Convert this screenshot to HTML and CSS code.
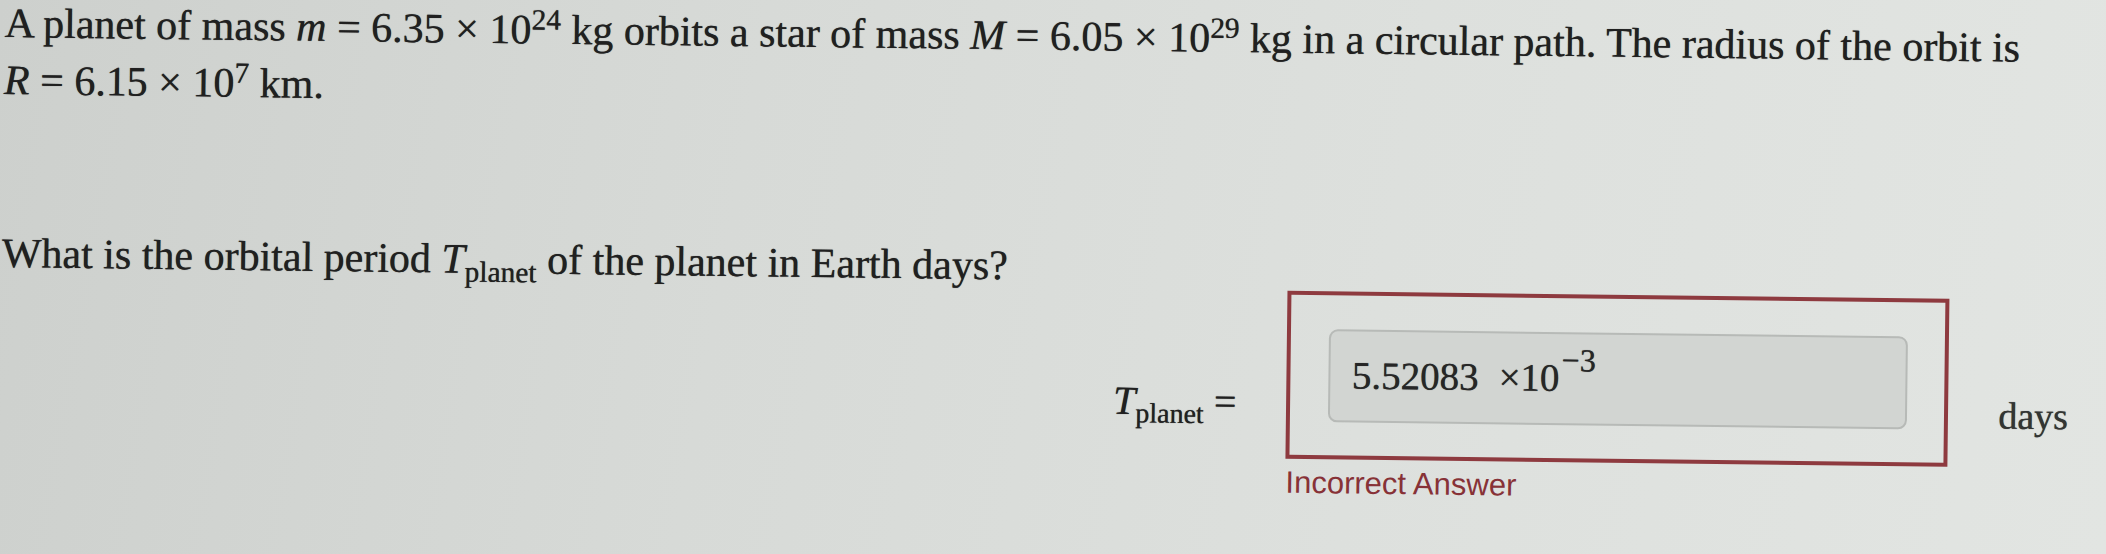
FILE: index.html
```html
<!DOCTYPE html>
<html lang="en">
<head>
<meta charset="utf-8">
<title>Orbital period</title>
<link rel="stylesheet" href="styles.css">
</head>
<body>
<div class="page">
  <p class="intro">A planet of mass <i class="mi">m</i> = 6.35 × 10<sup>24</sup> kg orbits a star of mass <i class="mi">M</i> = 6.05 × 10<sup>29</sup> kg in a circular path. The radius of the orbit is<br><i class="mi">R</i> = 6.15 × 10<sup>7</sup> km.</p>
  <p class="question">What is the orbital period <i class="mi">T</i><sub>planet</sub> of the planet in Earth days?</p>
  <div class="answer">
    <div class="label"><i class="mi">T</i><sub>planet</sub> =</div>
    <div class="box">
      <div class="input">5.52083<span class="times">×10<sup class="exp">−3</sup></span></div>
    </div>
    <div class="unit">days</div>
    <div class="feedback">Incorrect Answer</div>
  </div>
</div>
</body>
</html>
```
FILE: styles.css
```css
html, body {
  margin: 0;
  padding: 0;
}
body {
  width: 2106px;
  height: 554px;
  overflow: hidden;
  background: linear-gradient(100deg, #cdd0cd 0%, #d7dad7 35%, #dde0dd 65%, #e2e5e2 100%);
  font-family: "Liberation Serif", "Times New Roman", serif;
  color: #202020;
}
.page {
  padding-left: 5px;
  transform: rotate(0.7deg);
  transform-origin: 0 0;
  text-shadow: 0 0 0.7px rgba(20, 20, 20, 0.8);
}
.mi {
  font-style: italic;
}
sup {
  font-size: 0.7em;
  vertical-align: 0.48em;
  line-height: 0;
}
sub {
  font-size: 0.7em;
  vertical-align: -0.3em;
  line-height: 0;
}
.intro {
  margin: -5px 0 0;
  font-size: 42px;
  line-height: 57px;
}
.question {
  margin: 124px 0 0;
  font-size: 42px;
  line-height: 40px;
}
.answer {
  display: grid;
  grid-template-columns: auto auto auto;
  justify-content: end;
  align-items: start;
  column-gap: 50px;
  padding-right: 33px;
  margin-top: 2px;
}
.label {
  font-size: 40px;
  line-height: 44px;
  padding-top: 90px;
}
.box {
  border: 4px solid #8e3a3f;
  padding: 34px 37px 33px 38px;
  width: 662px;
  box-sizing: border-box;
}
.input {
  height: 93px;
  box-sizing: border-box;
  border: 2px solid #b7bab7;
  border-radius: 9px;
  background: #d2d5d2;
  padding: 22px 0 0 21px;
  font-size: 39px;
  line-height: 44px;
  color: #262626;
}
.times {
  margin-left: 20px;
}
.exp {
  font-size: 0.82em;
  vertical-align: 0.62em;
  margin-left: 2px;
}
.unit {
  font-size: 38px;
  line-height: 44px;
  padding-top: 94px;
  color: #333533;
}
.feedback {
  grid-column: 2;
  margin-top: 6px;
  font-family: "Liberation Sans", Arial, sans-serif;
  font-size: 31px;
  line-height: 36px;
  color: #873237;
  text-shadow: none;
}
```
